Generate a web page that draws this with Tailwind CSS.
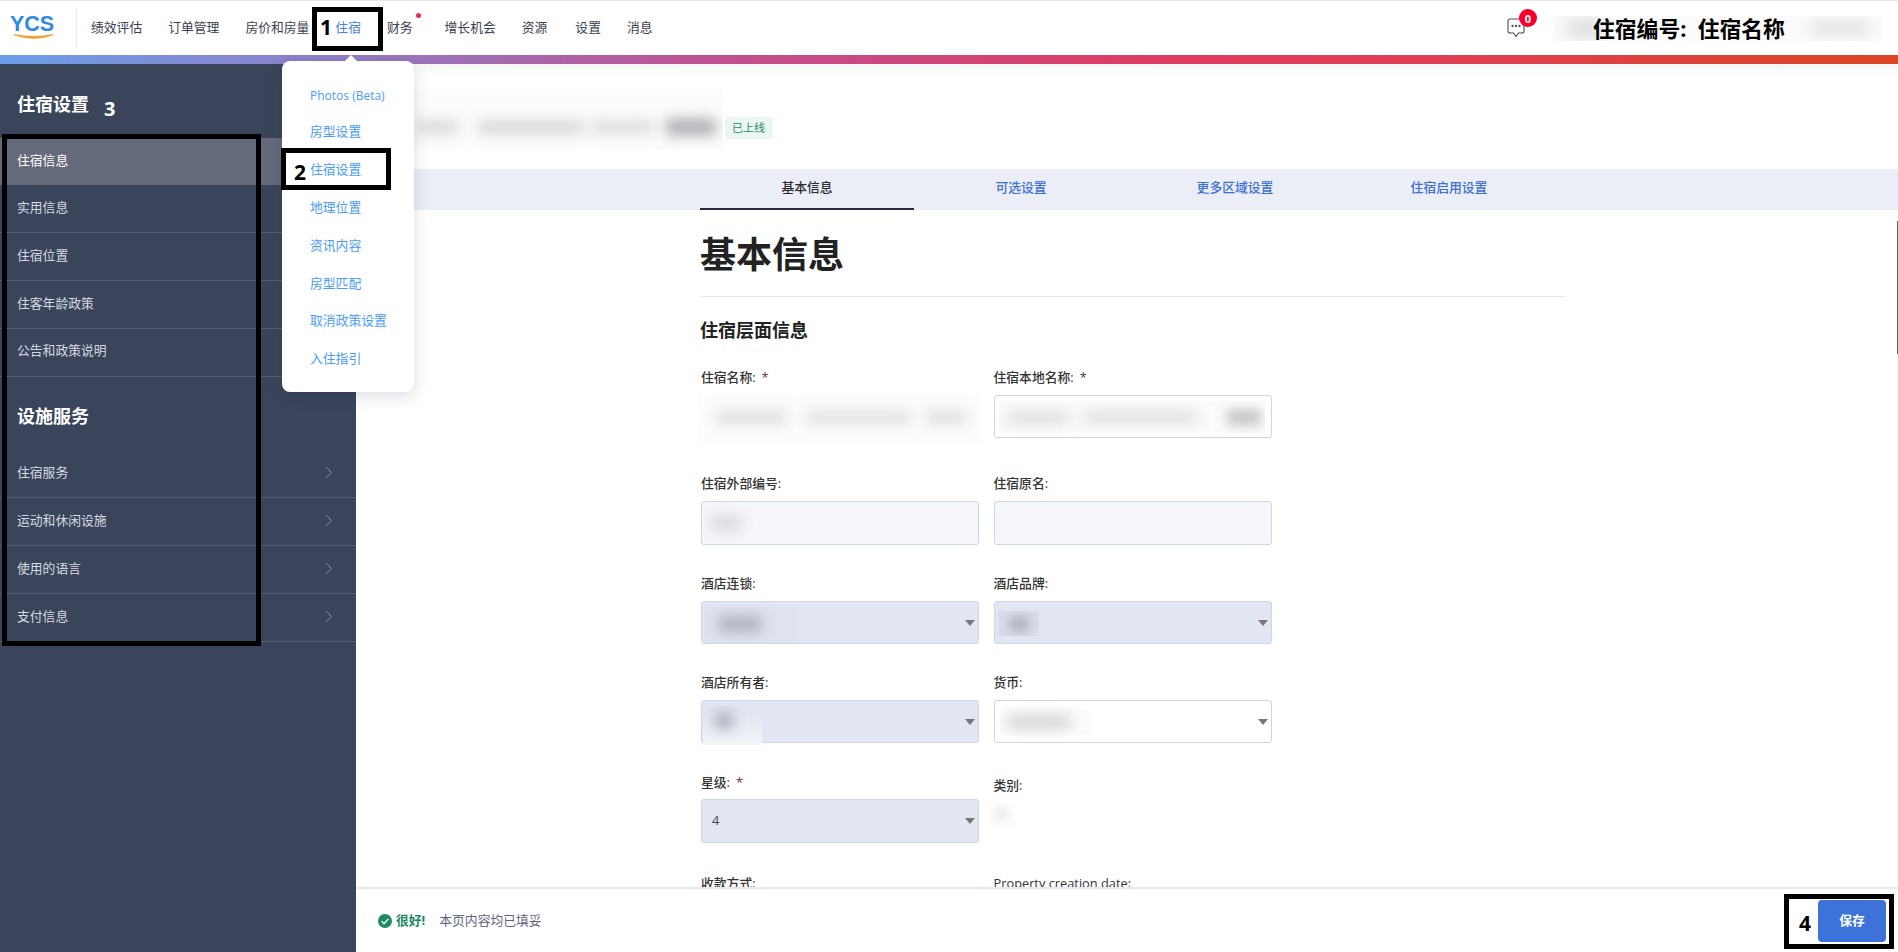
<!DOCTYPE html>
<html lang="zh-CN">
<head>
<meta charset="utf-8">
<title>YCS 住宿设置</title>
<script src="https://cdn.jsdelivr.net/npm/@tailwindcss/browser@4"></script>
</head>
<body class="font-['Open_Sans','Noto_Sans_CJK_SC',sans-serif] text-[12.8px] text-[#333]">
<div class="relative flex h-[952px] w-[1898px] flex-col overflow-hidden bg-white">

  <!-- header -->
  <header class="flex h-[55px] shrink-0 items-center border-t border-[#e8e8e8] bg-white">
    <div class="relative ml-[10px] flex h-[45px] w-[66px] shrink-0 flex-col">
      <span class="mt-[7px] font-['Liberation_Sans',sans-serif] text-[21.5px] leading-[22px] font-bold text-[#2d8ae0]">YCS</span>
      <svg class="mt-[-1px]" width="46" height="6" viewBox="0 0 46 6"><path d="M4 0.5 C16 5.5 32 5.5 43 0.5 C32 3 16 3 4 0.5Z" fill="#f09a2a" stroke="#f09a2a" stroke-width="0.8"/></svg>
    </div>
    <div class="h-[36px] w-px shrink-0 bg-[#e6e8f0]"></div>
    <nav class="ml-[14px] flex items-center gap-[26px] text-[#3b4151]">
      <span>绩效评估</span>
      <span>订单管理</span>
      <span>房价和房量</span>
      <span class="text-[#4a7fe6]">住宿</span>
      <span class="relative mr-[6px]">财务<span class="absolute top-[-5px] right-[-8px] size-[5px] rounded-full bg-[#ee2a4a]"></span></span>
      <span>增长机会</span>
      <span class="mr-[2px]">资源</span>
      <span>设置</span>
      <span>消息</span>
    </nav>
    <div class="relative ml-auto mr-[16px] flex h-[25px] w-[329px] items-center">
      <div class="absolute inset-0 overflow-hidden bg-[#fbfbfb]">
        <div class="absolute top-[4px] left-[14px] h-[17px] w-[36px] bg-[#d9dadc] blur-[8px]"></div>
        <div class="absolute top-[5px] right-[14px] h-[14px] w-[56px] bg-[#dfe0e2] blur-[8px]"></div>
      </div>
      <span class="relative ml-[40px] text-[21.8px] leading-[25px] font-bold whitespace-pre text-black">住宿编号:  住宿名称</span>
    </div>
    <div class="absolute top-[9px] left-[1507px] h-[28px] w-[31px]">
      <svg class="absolute top-[9px] left-0" width="18" height="20" viewBox="0 0 18 20" fill="none" stroke="#4a4f60" stroke-width="1.1"><path d="M3 1h12a2 2 0 0 1 2 2v10a2 2 0 0 1-2 2h-3.5L9 18.5 6.500 15H3a2 2 0 0 1-2-2V3a2 2 0 0 1 2-2z"/><circle cx="5.500" cy="8" r=".6" fill="#4a4f60"/><circle cx="9" cy="8" r=".6" fill="#4a4f60"/><circle cx="12.500" cy="8" r=".6" fill="#4a4f60"/></svg>
      <span class="absolute top-0 left-[12px] flex size-[18px] items-center justify-center rounded-full bg-[#f6002c] text-[11px] leading-none font-bold text-white">0</span>
    </div>
  </header>

  <!-- gradient bar -->
  <div class="h-[9px] shrink-0 bg-[linear-gradient(90deg,#6c9fe9_0%,#8f7fc9_17%,#c0508f_38%,#e03c62_62%,#e03f55_75%,#dc4524_100%)]"></div>

  <div class="flex min-h-0 flex-1">
    <!-- sidebar -->
    <aside class="w-[356px] shrink-0 bg-[#3a455b] text-[#d6dae3]">
      <h2 class="h-[74px] pt-[27px] pl-[17px] text-[18px] leading-[26px] font-bold text-white">住宿设置</h2>
      <div class="flex h-[47px] items-center bg-[#646a7b] pb-[2px] pl-[17px] text-white">住宿信息</div>
      <div class="flex h-[48px] items-center border-b border-[#566075] pb-px pl-[17px]">实用信息</div>
      <div class="flex h-[48px] items-center border-b border-[#566075] pb-px pl-[17px]">住宿位置</div>
      <div class="flex h-[48px] items-center border-b border-[#566075] pb-px pl-[17px]">住客年龄政策</div>
      <div class="flex h-[48px] items-center border-b border-[#566075] pb-[3px] pl-[17px]">公告和政策说明</div>
      <h2 class="h-[73px] pt-[26px] pl-[17px] text-[18px] leading-[26px] font-bold text-white">设施服务</h2>
      <div class="flex h-[48px] items-center justify-between border-b border-[#566075] pr-[24px] pb-[2px] pl-[17px]"><span>住宿服务</span><svg width="6" height="11" viewBox="0 0 6 11" fill="none" stroke="#8d94a6"><path d="M.5.5l5 5-5 5"/></svg></div>
      <div class="flex h-[48px] items-center justify-between border-b border-[#566075] pr-[24px] pb-[2px] pl-[17px]"><span>运动和休闲设施</span><svg width="6" height="11" viewBox="0 0 6 11" fill="none" stroke="#8d94a6"><path d="M.5.5l5 5-5 5"/></svg></div>
      <div class="flex h-[48px] items-center justify-between border-b border-[#566075] pr-[24px] pb-[2px] pl-[17px]"><span>使用的语言</span><svg width="6" height="11" viewBox="0 0 6 11" fill="none" stroke="#8d94a6"><path d="M.5.5l5 5-5 5"/></svg></div>
      <div class="flex h-[48px] items-center justify-between border-b border-[#566075] pr-[24px] pb-[2px] pl-[17px]"><span>支付信息</span><svg width="6" height="11" viewBox="0 0 6 11" fill="none" stroke="#8d94a6"><path d="M.5.5l5 5-5 5"/></svg></div>
    </aside>

    <!-- main -->
    <main class="flex min-w-0 flex-1 flex-col">
      <div class="relative min-h-0 flex-1 overflow-hidden">
        <div class="pointer-events-none absolute inset-x-0 top-0 h-[12px] bg-linear-to-b from-[#f6f6f7] to-white"></div>
        <div class="absolute top-[157px] right-0 h-[666px] w-px bg-[#f7f7f9]"></div>
        <div class="absolute top-[157px] right-0 h-[133px] w-px bg-[#5a6080]"></div>

        <!-- title row -->
        <div class="relative h-[105px] pt-[53px] pl-[369px]">
          <div class="absolute top-[26px] left-[56px] h-[60px] w-[311px] overflow-hidden bg-[#fcfcfc]">
            <div class="absolute top-[31px] left-[4px] h-[12px] w-[42px] bg-[#d4d4d7] blur-[7px]"></div>
            <div class="absolute top-[31px] left-[66px] h-[12px] w-[106px] bg-[#d2d2d6] blur-[7px]"></div>
            <div class="absolute top-[31px] left-[180px] h-[12px] w-[62px] bg-[#d8d8db] blur-[7px]"></div>
            <div class="absolute top-[29px] left-[254px] h-[16px] w-[50px] bg-[#aaaab0] blur-[7px]"></div>
          </div>
          <span class="inline-flex h-[22px] w-[47px] items-center justify-center rounded-[2px] bg-[#eaf6f1] text-[11px] text-[#2a8a6a]">已上线</span>
        </div>

        <!-- tabs -->
        <div class="flex h-[41px] bg-[#ebeef6] pl-[344px] font-medium text-[#3d6fd9]">
          <div class="flex w-[214px] items-center justify-center border-b-2 border-[#2a2a3c] pb-[2px] text-[#2b2b33]">基本信息</div>
          <div class="flex w-[214px] items-center justify-center pb-[4px]">可选设置</div>
          <div class="flex w-[214px] items-center justify-center pb-[4px]">更多区域设置</div>
          <div class="flex w-[214px] items-center justify-center pb-[4px]">住宿启用设置</div>
        </div>

        <!-- form -->
        <div class="pl-[344px]">
          <h1 class="mt-[20px] text-[36px] leading-[50px] font-bold text-[#222]">基本信息</h1>
          <div class="mt-[16px] h-px w-[865px] bg-[#e4e7ef]"></div>
          <h3 class="mt-[20px] text-[18px] leading-[26px] font-bold text-[#222]">住宿层面信息</h3>

          <div class="ml-px font-medium">
            <!-- row 1 -->
            <div class="mt-[25px] grid grid-cols-[278px_278px] gap-x-[14.5px]">
              <div class="relative">
                <div class="flex h-[20px] items-center"><span>住宿名称:</span><span class="ml-[6px] text-[#6b3050]">*</span></div>
                <div class="absolute top-[25px] left-[-3px] h-[50px] w-[282px] overflow-hidden bg-[#fcfcfc]">
                  <div class="absolute top-[19px] left-[18px] h-[11px] w-[70px] bg-[#d8d8da] blur-[7px]"></div>
                  <div class="absolute top-[19px] left-[108px] h-[11px] w-[105px] bg-[#dbdbdd] blur-[7px]"></div>
                  <div class="absolute top-[19px] left-[228px] h-[11px] w-[40px] bg-[#d8d8da] blur-[7px]"></div>
                </div>
                <div class="mt-[7px] h-[43px]"></div>
              </div>
              <div>
                <div class="flex h-[20px] items-center"><span>住宿本地名称:</span><span class="ml-[6px] text-[#6b3050]">*</span></div>
                <div class="relative mt-[7px] h-[43px] overflow-hidden rounded-[3px] border border-[#cdd5e8] bg-white">
                  <div class="absolute top-[5px] left-[4px] h-[32px] w-[266px] overflow-hidden bg-[#fbfbfb]">
                    <div class="absolute top-[11px] left-[8px] h-[11px] w-[62px] bg-[#dadadc] blur-[7px]"></div>
                    <div class="absolute top-[11px] left-[84px] h-[11px] w-[114px] bg-[#dcdcde] blur-[7px]"></div>
                    <div class="absolute top-[9px] left-[228px] h-[15px] w-[34px] bg-[#c2c2c6] blur-[6px]"></div>
                  </div>
                </div>
              </div>
            </div>

            <!-- row 2 -->
            <div class="mt-[36px] grid grid-cols-[278px_278px] gap-x-[14.5px]">
              <div>
                <div class="flex h-[20px] items-center">住宿外部编号:</div>
                <div class="relative mt-[7px] h-[44px] overflow-hidden rounded-[3px] border border-[#cdd5e8] bg-[#f5f6f9]">
                  <div class="absolute top-[14px] left-[9px] h-[14px] w-[30px] bg-[#d6d7da] blur-[7px]"></div>
                </div>
              </div>
              <div>
                <div class="flex h-[20px] items-center">住宿原名:</div>
                <div class="mt-[7px] h-[44px] rounded-[3px] border border-[#cdd5e8] bg-[#f5f6f9]"></div>
              </div>
            </div>

            <!-- row 3 -->
            <div class="mt-[29px] grid grid-cols-[278px_278px] gap-x-[14.5px]">
              <div>
                <div class="flex h-[20px] items-center">酒店连锁:</div>
                <div class="relative mt-[7px] flex h-[43px] items-center justify-end overflow-hidden rounded-[3px] border border-[#cdd5e8] bg-[#e1e6f2] pr-[3px]">
                  <div class="absolute top-[5px] left-0 h-[38px] w-[96px] bg-[#dfe3ee]">
                    <div class="absolute top-[10px] left-[16px] h-[14px] w-[44px] bg-[#a8abb6] blur-[7px]"></div>
                  </div>
                  <svg width="10" height="6" viewBox="0 0 10 6"><path d="M0 0h10L5 6z" fill="#777"/></svg>
                </div>
              </div>
              <div>
                <div class="flex h-[20px] items-center">酒店品牌:</div>
                <div class="relative mt-[7px] flex h-[43px] items-center justify-end overflow-hidden rounded-[3px] border border-[#cdd5e8] bg-[#e1e6f2] pr-[3px]">
                  <div class="absolute top-[9px] left-[3px] h-[25px] w-[41px] overflow-hidden bg-[#dadee9]">
                    <div class="absolute top-[6px] left-[12px] h-[14px] w-[18px] bg-[#a8abb7] blur-[6px]"></div>
                  </div>
                  <svg width="10" height="6" viewBox="0 0 10 6"><path d="M0 0h10L5 6z" fill="#777"/></svg>
                </div>
              </div>
            </div>

            <!-- row 4 -->
            <div class="mt-[29px] grid grid-cols-[278px_278px] gap-x-[14.5px]">
              <div>
                <div class="flex h-[20px] items-center">酒店所有者:</div>
                <div class="relative mt-[7px] flex h-[43px] items-center justify-end rounded-[3px] border border-[#cdd5e8] bg-[#e1e6f2] pr-[3px]">
                  <div class="absolute top-[5px] left-[1px] h-[39px] w-[59px] overflow-hidden bg-linear-to-b from-[#dfe3ee] to-[#f3f5f9]">
                    <div class="absolute top-[8px] left-[12px] h-[14px] w-[18px] bg-[#a0a3af] blur-[7px]"></div>
                  </div>
                  <svg width="10" height="6" viewBox="0 0 10 6"><path d="M0 0h10L5 6z" fill="#777"/></svg>
                </div>
              </div>
              <div>
                <div class="flex h-[20px] items-center">货币:</div>
                <div class="relative mt-[7px] flex h-[43px] items-center justify-end overflow-hidden rounded-[3px] border border-[#cdd5e8] bg-white pr-[3px]">
                  <div class="absolute top-[8px] left-[5px] h-[26px] w-[90px] bg-[#fbfbfb]">
                    <div class="absolute top-[7px] left-[8px] h-[12px] w-[62px] bg-[#cecfd1] blur-[7px]"></div>
                  </div>
                  <svg width="10" height="6" viewBox="0 0 10 6"><path d="M0 0h10L5 6z" fill="#777"/></svg>
                </div>
              </div>
            </div>

            <!-- row 5 -->
            <div class="mt-[30px] grid grid-cols-[278px_278px] gap-x-[14.5px]">
              <div>
                <div class="flex h-[20px] items-center"><span>星级:</span><span class="ml-[6px] text-[#6b3050]">*</span></div>
                <div class="mt-[6px] flex h-[44px] items-center justify-between rounded-[3px] border border-[#cdd5e8] bg-[#e1e6f2] pr-[3px] pl-[10px] font-normal text-[#444]">
                  <span>4</span>
                  <svg width="10" height="6" viewBox="0 0 10 6"><path d="M0 0h10L5 6z" fill="#777"/></svg>
                </div>
              </div>
              <div>
                <div class="mt-[3px] flex h-[20px] items-center">类别:</div>
                <div class="relative mt-[5px] ml-[-6px] h-[28px] w-[28px] overflow-hidden">
                  <div class="absolute top-[6px] left-[6px] size-[14px] bg-[#ebebec] blur-[5px]"></div>
                </div>
              </div>
            </div>

            <!-- row 6 -->
            <div class="mt-[31px] grid grid-cols-[278px_278px] gap-x-[14.5px]">
              <div class="flex h-[20px] items-center">收款方式:</div>
              <div class="flex h-[20px] items-center">Property creation date:</div>
            </div>
          </div>
        </div>
      </div>

      <!-- footer -->
      <footer class="flex h-[65px] shrink-0 items-center justify-between border-t-2 border-[#e6e9f2] bg-white pr-[12px] pl-[22px]">
        <div class="flex items-center">
          <svg width="14" height="14" viewBox="0 0 14 14"><circle cx="7" cy="7" r="7" fill="#1e8a63"/><path d="M3.600 7.300l2.400 2.400 4.400-4.800" fill="none" stroke="#fff" stroke-width="1.400"/></svg>
          <span class="ml-[4px] font-bold text-[#1e8a63]">很好!</span>
          <span class="ml-[14px] text-[#5d6580]">本页内容均已填妥</span>
        </div>
        <button class="flex h-[42px] w-[68px] items-center justify-center rounded-[4px] bg-[#3d73d9] font-bold text-white">保存</button>
      </footer>
    </main>
  </div>

  <!-- dropdown menu -->
  <div class="absolute top-[61px] left-[282px] h-[331px] w-[132px] rounded-[8px] bg-white pt-[16px] pl-[28px] text-[#4a9bff] shadow-[0_4px_16px_rgba(30,40,70,0.16)]">
    <svg class="absolute top-[-6px] left-[62px]" width="14" height="7" viewBox="0 0 14 7"><path d="M0 7L7 0l7 7z" fill="#fff"/></svg>
    <div class="flex h-[38px] items-center text-[12px]">Photos (Beta)</div>
    <div class="-mt-[2px] flex h-[38px] items-center">房型设置</div>
    <div class="flex h-[38px] items-center">住宿设置</div>
    <div class="flex h-[38px] items-center">地理位置</div>
    <div class="flex h-[38px] items-center">资讯内容</div>
    <div class="flex h-[38px] items-center">房型匹配</div>
    <div class="-mt-px flex h-[38px] items-center">取消政策设置</div>
    <div class="flex h-[38px] items-center">入住指引</div>
  </div>

  <!-- annotation boxes -->
  <div class="absolute top-[7px] left-[312px] h-[44px] w-[71px] border-[5px] border-black">
    <span class="absolute top-[1px] left-[3px] font-['Noto_Sans',sans-serif] text-[21px] leading-[28px] font-bold text-black">1</span>
  </div>
  <div class="absolute top-[148px] left-[281px] h-[42px] w-[110px] border-[5px] border-black">
    <span class="absolute top-[5px] left-[8px] font-['Noto_Sans',sans-serif] text-[21px] leading-[28px] font-bold text-black">2</span>
  </div>
  <div class="absolute top-[134px] left-[2px] h-[512px] w-[259px] border-[5px] border-black"></div>
  <span class="absolute top-[95px] left-[104px] font-['Noto_Sans',sans-serif] text-[20px] leading-[28px] font-bold text-white">3</span>
  <div class="absolute top-[894px] left-[1784px] h-[55px] w-[110px] border-[5px] border-black">
    <span class="absolute top-[10px] left-[10px] font-['Noto_Sans',sans-serif] text-[21px] leading-[28px] font-bold text-black">4</span>
  </div>
</div>
</body>
</html>
